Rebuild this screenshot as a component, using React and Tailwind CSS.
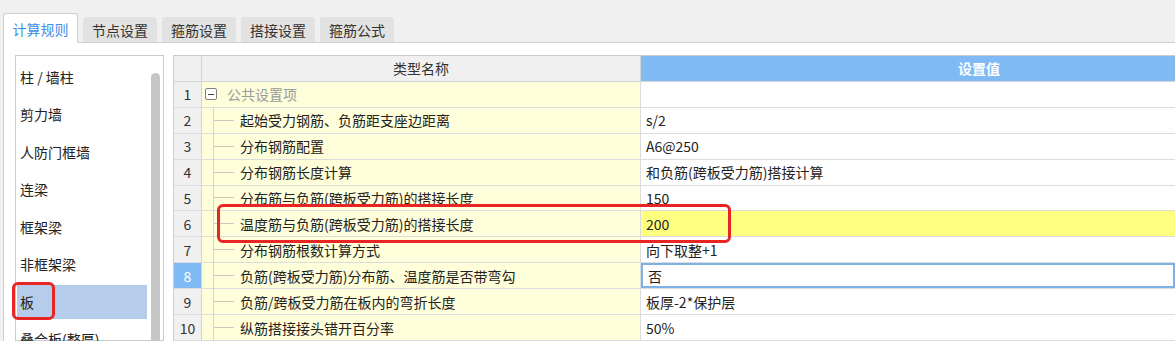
import React from "react";

const tabs = ["计算规则", "节点设置", "箍筋设置", "搭接设置", "箍筋公式"];

const sideItems = ["柱 / 墙柱", "剪力墙", "人防门框墙", "连梁", "框架梁", "非框架梁", "板", "叠合板(整厚)"];

const rows = [
    { name: "公共设置项", value: "", group: true },
    { name: "起始受力钢筋、负筋距支座边距离", value: "s/2" },
    { name: "分布钢筋配置", value: "A6@250" },
    { name: "分布钢筋长度计算", value: "和负筋(跨板受力筋)搭接计算" },
    { name: "分布筋与负筋(跨板受力筋)的搭接长度", value: "150" },
    { name: "温度筋与负筋(跨板受力筋)的搭接长度", value: "200", highlight: true },
    { name: "分布钢筋根数计算方式", value: "向下取整+1" },
    { name: "负筋(跨板受力筋)分布筋、温度筋是否带弯勾", value: "否", active: true },
    { name: "负筋/跨板受力筋在板内的弯折长度", value: "板厚-2*保护层" },
    { name: "纵筋搭接接头错开百分率", value: "50%" },
];

function Row({ row, index }) {
    return (
        <div className="flex h-[26px] border-b border-[#dcdcdc]">
            <div
                className={`w-[28px] shrink-0 flex items-center justify-center border-r border-[#d4d4d4] ${
                    row.active ? "bg-[#7fbaf5] text-white" : "bg-[#f0f0f0] text-[#333]"
                }`}
            >
                {index + 1}
            </div>
            <div className="w-[439px] shrink-0 relative flex items-center bg-[#fffedb] border-r border-[#dcdcdc]">
                {row.group ? (
                    <>
                        <div className="ml-[3px] w-[12px] h-[12px] border border-[#808080] rounded-[2px] bg-white flex items-center justify-center">
                            <div className="w-[6px] h-[1px] bg-[#444]" />
                        </div>
                        <span className="ml-[10px] text-[#9a9a9a]">{row.name}</span>
                    </>
                ) : (
                    <>
                        <div className="absolute left-[11px] top-0 bottom-[-1px] w-px bg-[#d8d8c8]" />
                        <div className="ml-[11px] w-[21px] h-px bg-[#c8c8c0]" />
                        <span className="ml-[6px] text-[#222]">{row.name}</span>
                    </>
                )}
            </div>
            <div
                className={`flex-1 flex items-center pl-[5px] text-[#222] ${
                    row.highlight ? "bg-[#ffff80]" : "bg-white"
                } ${row.active ? "border-2 border-[#7fb0e8] pl-[4px]" : ""}`}
            >
                {row.value}
            </div>
        </div>
    );
}

export default function App() {
    return (
        <div
            className="relative w-[1175px] h-[341px] overflow-hidden bg-[#f0f0f0] text-[14px] leading-none"
            style={{ fontFamily: '"Microsoft YaHei", "Noto Sans CJK SC", "Noto Sans", sans-serif' }}
        >
            <div className="flex items-end gap-[5px] pl-[3px] pt-[13px] h-[42px]">
                {tabs.map((t, i) =>
                    i === 0 ? (
                        <div
                            key={t}
                            className="h-[30px] w-[75px] flex items-center justify-center bg-white border border-b-0 border-[#cfcfcf] rounded-t-[3px] text-[#3d8ee6] -mb-px relative z-10"
                        >
                            {t}
                        </div>
                    ) : (
                        <div
                            key={t}
                            className="h-[25px] w-[74px] flex items-center justify-center bg-[#e2e2e2] rounded-t-[3px] text-[#333]"
                        >
                            {t}
                        </div>
                    )
                )}
            </div>

            <div className="ml-[3px] h-[299px] bg-white border-l border-t border-[#cfcfcf] flex pl-[11px] pt-[12px] gap-[9px]">
                <div className="w-[149px] shrink-0 border border-[#cccccc] bg-white flex">
                    <div className="flex-1 pt-[2px] pl-px">
                        {sideItems.map((s) => (
                            <div key={s} className="h-[37.5px] flex items-center">
                                {s === "板" ? (
                                    <div className="w-full h-[34px] bg-[#b5cdeb] flex items-center pl-[3px] text-[#222]">
                                        {s}
                                    </div>
                                ) : (
                                    <span className="pl-[3px] text-[#222] whitespace-nowrap">{s}</span>
                                )}
                            </div>
                        ))}
                    </div>
                    <div className="w-[16px] shrink-0 flex justify-center pt-[17px]">
                        <div className="w-[9px] h-[300px] rounded-full bg-[#c6c6c6]" />
                    </div>
                </div>

                <div className="flex-1 border-l border-t border-[#cccccc] flex flex-col">
                    <div className="flex h-[26px] border-b border-[#d4d4d4]">
                        <div className="w-[28px] shrink-0 bg-[#f0f0f0] border-r border-[#d4d4d4]" />
                        <div className="w-[439px] shrink-0 bg-[#f0f0f0] border-r border-[#d4d4d4] flex items-center justify-center text-[#333]">
                            类型名称
                        </div>
                        <div className="flex-1 bg-[#7fbaf5] flex items-center pl-[317px] text-white font-bold">
                            设置值
                        </div>
                    </div>
                    {rows.map((r, i) => (
                        <Row key={i} row={r} index={i} />
                    ))}
                </div>
            </div>

            <div className="absolute left-[217px] top-[204px] w-[514px] h-[39px] border-[3px] border-[#e82424] rounded-[6px]" />
            <div className="absolute left-[12px] top-[282px] w-[43px] h-[38px] border-[3px] border-[#e82424] rounded-[6px]" />
        </div>
    );
}
